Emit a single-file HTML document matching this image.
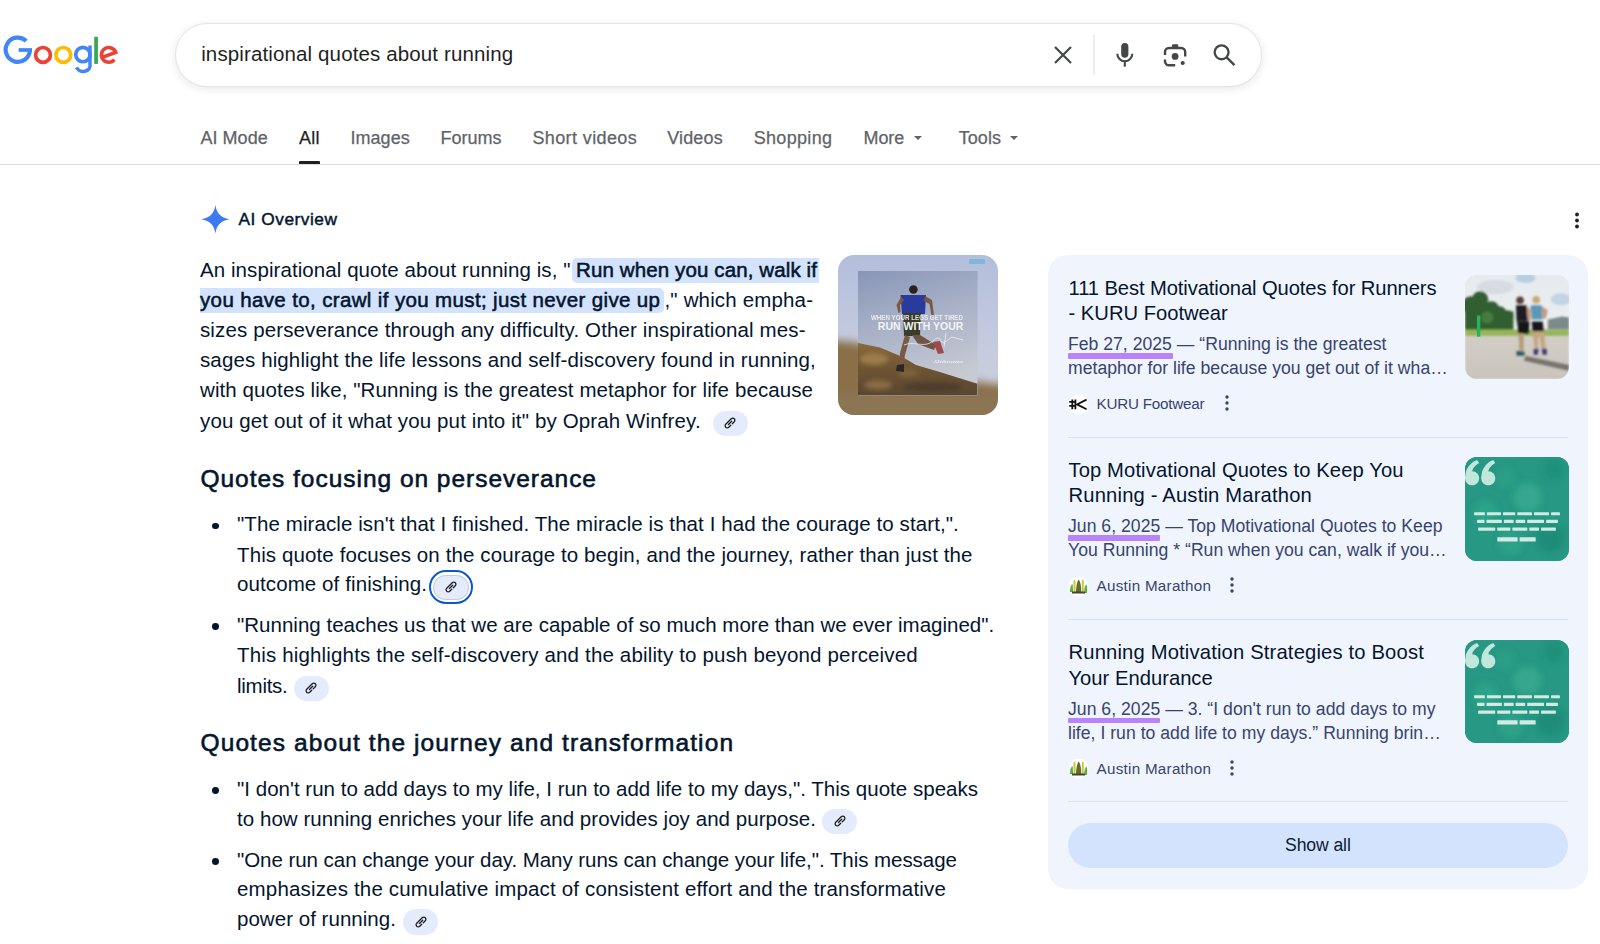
<!DOCTYPE html>
<html><head><meta charset="utf-8"><style>
html,body{margin:0;padding:0;background:#fff;width:1600px;height:944px;overflow:hidden;position:relative}
body{font-family:"Liberation Sans",sans-serif}
.abs{position:absolute}
.t{position:absolute;white-space:nowrap}
.t b{font-weight:700}
.sbox{left:174.8px;top:22.9px;width:1087px;height:64.4px;border-radius:32px;background:#fff;border:1px solid #e2e4e8;box-sizing:border-box;box-shadow:0 2px 8px rgba(32,33,36,.10)}
.chip{background:#e3ebfd;border-radius:13px}
.img1{left:838px;top:255px;width:159.5px;height:159.5px;border-radius:16px;overflow:hidden}
.i1bg{position:absolute;inset:0;background:linear-gradient(180deg,#b4bfd8 0%,#c5cde0 35%,#b9b8b4 52%,#8f7451 62%,#7a5e3a 80%,#9a8462 100%)}
.i1in{position:absolute;left:20px;top:16px;width:120px;height:124px;background:linear-gradient(180deg,#8f9dbb 0%,#aab4cb 40%,#c4c8d2 70%,#cfd0d3 100%)}
.panel{left:1048px;top:255px;width:540px;height:633.5px;border-radius:20px;background:#f0f4fd}
.img2{width:103.5px;height:103.5px;border-radius:12px;overflow:hidden;background:#e8ecef}
.img3{width:103.5px;height:103.5px;border-radius:12px;overflow:hidden;background:#279a83}
.showall{left:1068px;top:823px;width:500px;height:45px;border-radius:23px;background:#d3e3fd}
</style></head><body>
<svg class="abs" style="left:0;top:28px" width="125" height="50" viewBox="0 28 125 50">
<g fill="none" stroke-linecap="butt">
<path d="M26.24 40.96 A12.15 12.15 0 1 0 29.95 50.0" stroke="#4285f4" stroke-width="4.2"/>
<path d="M18.6 50.0 H32.0" stroke="#4285f4" stroke-width="3.7"/>
<circle cx="43" cy="54.9" r="7.4" stroke="#ea4335" stroke-width="3.7"/>
<circle cx="63.3" cy="54.9" r="7.4" stroke="#fbbc05" stroke-width="3.7"/>
<circle cx="82.9" cy="54.6" r="7.15" stroke="#4285f4" stroke-width="3.7"/>
<path d="M90.0 45.6 V64.8 A6.9 5.6 0 0 1 76.6 67.4" stroke="#4285f4" stroke-width="3.5"/>
<path d="M96.05 36.8 V63.9" stroke="#34a853" stroke-width="3.7"/>
<path d="M102.0 57.4 L115.66 52.34 A7.35 7.35 0 1 0 114.4 59.6" stroke="#ea4335" stroke-width="3.6"/>
</g></svg>
<div class="abs sbox"></div>
<div id="q" class="t" style="left:201.2px;top:43.65px;font-size:20.5px;line-height:20.5px;color:#1f1f1f;font-weight:400;letter-spacing:0.129px;">inspirational quotes about running</div>
<svg class="abs" style="left:1050px;top:30px" width="200" height="50" viewBox="1050 30 200 50">
<path d="M1055 47 L1071 63 M1071 47 L1055 63" stroke="#444746" stroke-width="2.2"/>
<rect x="1093.5" y="34.7" width="1" height="40.3" fill="#dadce0"/>
<rect x="1121.2" y="42.9" width="7.2" height="14.8" rx="3.6" fill="#444746"/>
<path d="M1117.3 53.8 A7.5 7.5 0 0 0 1132.3 53.8" fill="none" stroke="#444746" stroke-width="2.1"/>
<path d="M1124.8 61.5 V66.7" stroke="#444746" stroke-width="2.1"/>
<g fill="none" stroke="#444746" stroke-width="2.4">
<path d="M1165 55 V52 A4 4 0 0 1 1169 48 H1181.2 A4 4 0 0 1 1185.2 52 V56.5"/>
<path d="M1165 59.5 V61.3 A4 4 0 0 0 1169 65.3 H1175.2"/>
</g>
<rect x="1172" y="44.2" width="6.2" height="3.2" rx="1" fill="#444746"/>
<circle cx="1175.1" cy="56.4" r="3.4" fill="#444746"/>
<circle cx="1182.7" cy="63" r="2.1" fill="#444746"/>
<circle cx="1221.6" cy="52.3" r="6.95" fill="none" stroke="#444746" stroke-width="2.3"/>
<path d="M1226.6 57.3 L1234.5 65.2" stroke="#444746" stroke-width="2.4"/>
</svg>
<div id="t1" class="t" style="left:200.5px;top:128.56px;font-size:18px;line-height:18px;color:#5f6368;font-weight:400;letter-spacing:0.026px;-webkit-text-stroke:0.25px #5f6368;">AI Mode</div>
<div id="t2" class="t" style="left:299px;top:128.56px;font-size:18px;line-height:18px;color:#1f1f1f;font-weight:400;letter-spacing:0.242px;-webkit-text-stroke:0.25px #1f1f1f;">All</div>
<div id="t3" class="t" style="left:350.5px;top:128.56px;font-size:18px;line-height:18px;color:#5f6368;font-weight:400;letter-spacing:0.034px;-webkit-text-stroke:0.25px #5f6368;">Images</div>
<div id="t4" class="t" style="left:440.5px;top:128.56px;font-size:18px;line-height:18px;color:#5f6368;font-weight:400;letter-spacing:-0.023px;-webkit-text-stroke:0.25px #5f6368;">Forums</div>
<div id="t5" class="t" style="left:532.4px;top:128.56px;font-size:18px;line-height:18px;color:#5f6368;font-weight:400;letter-spacing:0.394px;-webkit-text-stroke:0.25px #5f6368;">Short videos</div>
<div id="t6" class="t" style="left:667.2px;top:128.56px;font-size:18px;line-height:18px;color:#5f6368;font-weight:400;letter-spacing:0.156px;-webkit-text-stroke:0.25px #5f6368;">Videos</div>
<div id="t7" class="t" style="left:753.7px;top:128.56px;font-size:18px;line-height:18px;color:#5f6368;font-weight:400;letter-spacing:0.317px;-webkit-text-stroke:0.25px #5f6368;">Shopping</div>
<div id="t8" class="t" style="left:863.5px;top:128.56px;font-size:18px;line-height:18px;color:#5f6368;font-weight:400;letter-spacing:-0.072px;-webkit-text-stroke:0.25px #5f6368;">More</div>
<div id="t9" class="t" style="left:958.7px;top:128.56px;font-size:18px;line-height:18px;color:#5f6368;font-weight:400;letter-spacing:0.067px;-webkit-text-stroke:0.25px #5f6368;">Tools</div>
<svg class="abs" style="left:900px;top:130px" width="130" height="20"><path d="M14 6 L22 6 L18 10 Z" fill="#5e6166"/><path d="M110 6 L118 6 L114 10 Z" fill="#5e6166"/></svg>
<div class="abs" style="left:299px;top:161px;width:21px;height:3px;background:#1f1f1f;border-radius:1px 1px 0 0"></div>
<div class="abs" style="left:0;top:164px;width:1600px;height:1px;background:#dadce0"></div>
<svg class="abs" style="left:200px;top:204px" width="32" height="32" viewBox="0 0 32 32">
<path d="M15.4 1 C16.6 9.2 20.5 13.6 29.5 15.3 C20.5 17.0 16.6 21.4 15.4 29.6 C14.2 21.4 10.3 17.0 1.2 15.3 C10.3 13.6 14.2 9.2 15.4 1 Z" fill="#3b7af0"/>
</svg>
<div id="aio" class="t" style="left:238.5px;top:211.16px;font-size:17.3px;line-height:17.3px;color:#04152e;font-weight:400;letter-spacing:0.534px;-webkit-text-stroke:0.45px #04152e;">AI Overview</div>
<svg class="abs" style="left:1570px;top:210px" width="14" height="22"><circle cx="7" cy="4.5" r="1.9" fill="#1f1f1f"/><circle cx="7" cy="10.5" r="1.9" fill="#1f1f1f"/><circle cx="7" cy="16.5" r="1.9" fill="#1f1f1f"/></svg>
<div class="abs" style="left:572px;top:257.5px;width:247px;height:25px;background:#d3e3fd;border-radius:5px 0 0 5px"></div>
<div class="abs" style="left:200px;top:288px;width:463.5px;height:25px;background:#d3e3fd;border-radius:0 5px 5px 0"></div>
<div id="p1a" class="t" style="left:200px;top:259.55px;font-size:20.5px;line-height:20.5px;color:#04152e;font-weight:400;letter-spacing:0.075px;">An inspirational quote about running is, "</div>
<div id="p1b" class="t" style="left:576px;top:259.55px;font-size:20.5px;line-height:20.5px;color:#04152e;font-weight:400;letter-spacing:0.118px;-webkit-text-stroke:0.55px #04152e;">Run when you can, walk if</div>
<div id="p2a" class="t" style="left:200px;top:289.75px;font-size:20.5px;line-height:20.5px;color:#04152e;font-weight:400;letter-spacing:0.365px;-webkit-text-stroke:0.55px #04152e;">you have to, crawl if you must; just never give up</div>
<div id="p2b" class="t" style="left:664.5px;top:289.75px;font-size:20.5px;line-height:20.5px;color:#04152e;font-weight:400;letter-spacing:0.157px;">," which empha-</div>
<div id="p3" class="t" style="left:200px;top:319.95px;font-size:20.5px;line-height:20.5px;color:#04152e;font-weight:400;letter-spacing:0.122px;">sizes perseverance through any difficulty. Other inspirational mes-</div>
<div id="p4" class="t" style="left:200px;top:350.15px;font-size:20.5px;line-height:20.5px;color:#04152e;font-weight:400;letter-spacing:0.122px;">sages highlight the life lessons and self-discovery found in running,</div>
<div id="p5" class="t" style="left:200px;top:380.35px;font-size:20.5px;line-height:20.5px;color:#04152e;font-weight:400;letter-spacing:0.094px;">with quotes like, "Running is the greatest metaphor for life because</div>
<div id="p6" class="t" style="left:200px;top:410.55px;font-size:20.5px;line-height:20.5px;color:#04152e;font-weight:400;letter-spacing:0.128px;">you get out of it what you put into it" by Oprah Winfrey.</div>
<div class="abs chip" style="left:712.7px;top:410.6px;width:35.2px;height:25.5px"><svg width="20" height="20" viewBox="-10 -10 20 20" style="position:absolute;left:7.7px;top:2.6px"><g transform="rotate(-45)" fill="none" stroke="#1f1f1f" stroke-width="1.3" stroke-linecap="round"><path d="M-1.1 2.15 H-3.9 A2.15 2.15 0 0 1 -3.9 -2.15 H3.9 A2.15 2.15 0 0 1 3.9 2.15 H1.1 M-2.2 0 H2.4"/></g></svg></div>
<div class="abs img1"><svg width="160" height="160" viewBox="0 0 160 160">
<defs>
<filter id="bl" x="-20%" y="-20%" width="140%" height="140%"><feGaussianBlur stdDeviation="4"/></filter>
<filter id="bl1" x="-20%" y="-20%" width="140%" height="140%"><feGaussianBlur stdDeviation="0.7"/></filter><filter id="bl2" x="-20%" y="-20%" width="140%" height="140%"><feGaussianBlur stdDeviation="2.2"/></filter><clipPath id="inclip"><rect x="20" y="16" width="119.5" height="124.5"/></clipPath>
<linearGradient id="sky0" x1="0" y1="0" x2="0" y2="1"><stop offset="0" stop-color="#b3bedb"/><stop offset="0.5" stop-color="#c3cadf"/><stop offset="1" stop-color="#cfd2dc"/></linearGradient>
<linearGradient id="sky1" x1="0" y1="0" x2="0.3" y2="1"><stop offset="0" stop-color="#8896b6"/><stop offset="0.45" stop-color="#a6afc6"/><stop offset="1" stop-color="#c6cad3"/></linearGradient>
<linearGradient id="hill" x1="0" y1="0" x2="0" y2="1"><stop offset="0" stop-color="#8a6a3c"/><stop offset="0.5" stop-color="#6e5433"/><stop offset="1" stop-color="#5a4630"/></linearGradient>
</defs>
<rect width="160" height="160" fill="url(#sky0)"/>
<g filter="url(#bl)">
<path d="M-10 86 C20 84 45 95 80 112 C110 122 140 128 170 130 V170 H-10 Z" fill="#8a7048"/>
<rect x="-10" y="138" width="180" height="30" fill="#8c7452"/>
</g>
<rect x="20" y="16" width="119.5" height="124.5" fill="url(#sky1)"/>
<g clip-path="url(#inclip)">
<path d="M20 88 L42 92.4 L64 101.7 L78 110 L101.7 117 L139.5 128.8 V140.5 H20 Z" fill="url(#hill)" filter="url(#bl1)"/>
<g filter="url(#bl2)">
<ellipse cx="36" cy="104" rx="14" ry="6" fill="#a88650" opacity="0.75"/>
<ellipse cx="95" cy="132" rx="30" ry="5" fill="#46372a" opacity="0.7"/>
<ellipse cx="40" cy="130" rx="14" ry="5" fill="#a08050" opacity="0.6"/>
<ellipse cx="70" cy="118" rx="10" ry="4" fill="#8a6e44" opacity="0.6"/>
</g></g>
<g filter="url(#bl1)">
<circle cx="75.4" cy="34.5" r="4.3" fill="#2a2420"/>
<path d="M62.5 40 L88 40 L87 59 L64 59 Z" fill="#2b3a9e"/>
<path d="M63 42 L58.5 50 L60.5 58 L62.5 57 L62 50 L66 45 Z" fill="#7a5a45"/>
<path d="M87 41 L94 45 L96 60 L93.5 61 L91.5 49 L86 46 Z" fill="#7a5a45"/>
<path d="M65 58 L83 58 L82 81 L66 81 Z" fill="#3a3a2c"/>
<path d="M67 80 L72 82 L67 100 L65 112 L61 112 L62 98 Z" fill="#7a5a45"/>
<path d="M59 110 L66 109 L66 117 L58 116 Z" fill="#2a2624"/>
<path d="M74 80 L82 80 L98 90 L96 95 L80 89 Z" fill="#6f5444"/>
<path d="M95 87 L102 86 L106 98 L100 99 Z" fill="#a04848"/>
</g>
<g fill="#f4f4f6" font-family="Liberation Sans" font-weight="700">
<text x="33" y="65.3" font-size="6.6" textLength="92" lengthAdjust="spacingAndGlyphs" opacity="0.9">WHEN YOUR LEGS GET TIRED</text>
<text x="39.8" y="75.4" font-size="10.8" textLength="85.6" lengthAdjust="spacingAndGlyphs">RUN WITH YOUR</text>
<text x="95" y="108" font-size="3.8" textLength="30" lengthAdjust="spacingAndGlyphs" opacity="0.85">-Unknown</text>
</g>
<path d="M66 90 C75 86 84 92 92 88 C98 84 100 80 103 86 C106 90 110 84 114 82 L125 85 M108 78 L106 92" fill="none" stroke="#eef0f4" stroke-width="0.9" opacity="0.85"/>
<rect x="131" y="4" width="16" height="5" rx="1" fill="#5fb0d8" opacity="0.6"/>
</svg></div>
<div id="h1" class="t" style="left:200.5px;top:467.36px;font-size:24.5px;line-height:24.5px;color:#04152e;font-weight:400;letter-spacing:0.971px;-webkit-text-stroke:0.6px #04152e;">Quotes focusing on perseverance</div>
<div class="abs" style="left:211.9px;top:522.5px;width:6.8px;height:6.8px;border-radius:50%;background:#04152e"></div>
<div id="l1a" class="t" style="left:237px;top:514.45px;font-size:20.5px;line-height:20.5px;color:#04152e;font-weight:400;letter-spacing:0.089px;">"The miracle isn't that I finished. The miracle is that I had the courage to start,".</div>
<div id="l1b" class="t" style="left:237px;top:544.55px;font-size:20.5px;line-height:20.5px;color:#04152e;font-weight:400;letter-spacing:0.110px;">This quote focuses on the courage to begin, and the journey, rather than just the</div>
<div id="l1c" class="t" style="left:237px;top:574.45px;font-size:20.5px;line-height:20.5px;color:#04152e;font-weight:400;letter-spacing:0.098px;">outcome of finishing.</div>
<div class="abs" style="left:428.5px;top:569.8px;width:44.8px;height:34px;border-radius:17px;border:2.6px solid #0b57d0;box-sizing:border-box"></div>
<div class="abs chip" style="left:433px;top:574.5px;width:35.5px;height:25.5px"><svg width="20" height="20" viewBox="-10 -10 20 20" style="position:absolute;left:7.8px;top:2.6px"><g transform="rotate(-45)" fill="none" stroke="#1f1f1f" stroke-width="1.3" stroke-linecap="round"><path d="M-1.1 2.15 H-3.9 A2.15 2.15 0 0 1 -3.9 -2.15 H3.9 A2.15 2.15 0 0 1 3.9 2.15 H1.1 M-2.2 0 H2.4"/></g></svg></div>
<div class="abs" style="left:433px;top:574.5px;width:35.5px;height:25.5px;border-radius:13px;border:1px solid #c8cacd;box-sizing:border-box"></div>
<div class="abs" style="left:211.9px;top:623.4px;width:6.8px;height:6.8px;border-radius:50%;background:#04152e"></div>
<div id="l2a" class="t" style="left:237px;top:615.15px;font-size:20.5px;line-height:20.5px;color:#04152e;font-weight:400;letter-spacing:0.011px;">"Running teaches us that we are capable of so much more than we ever imagined".</div>
<div id="l2b" class="t" style="left:237px;top:645.45px;font-size:20.5px;line-height:20.5px;color:#04152e;font-weight:400;letter-spacing:0.159px;">This highlights the self-discovery and the ability to push beyond perceived</div>
<div id="l2c" class="t" style="left:237px;top:675.55px;font-size:20.5px;line-height:20.5px;color:#04152e;font-weight:400;letter-spacing:-0.265px;">limits.</div>
<div class="abs chip" style="left:293.8px;top:675.6px;width:34.9px;height:25.5px"><svg width="20" height="20" viewBox="-10 -10 20 20" style="position:absolute;left:7.5px;top:2.6px"><g transform="rotate(-45)" fill="none" stroke="#1f1f1f" stroke-width="1.3" stroke-linecap="round"><path d="M-1.1 2.15 H-3.9 A2.15 2.15 0 0 1 -3.9 -2.15 H3.9 A2.15 2.15 0 0 1 3.9 2.15 H1.1 M-2.2 0 H2.4"/></g></svg></div>
<div id="h2" class="t" style="left:200.5px;top:731.26px;font-size:24.5px;line-height:24.5px;color:#04152e;font-weight:400;letter-spacing:1.102px;-webkit-text-stroke:0.6px #04152e;">Quotes about the journey and transformation</div>
<div class="abs" style="left:211.9px;top:787.3px;width:6.8px;height:6.8px;border-radius:50%;background:#04152e"></div>
<div id="l3a" class="t" style="left:237px;top:779.05px;font-size:20.5px;line-height:20.5px;color:#04152e;font-weight:400;letter-spacing:0.019px;">"I don't run to add days to my life, I run to add life to my days,". This quote speaks</div>
<div id="l3b" class="t" style="left:237px;top:808.85px;font-size:20.5px;line-height:20.5px;color:#04152e;font-weight:400;letter-spacing:0.056px;">to how running enriches your life and provides joy and purpose.</div>
<div class="abs chip" style="left:822px;top:808.9px;width:35.0px;height:25.5px"><svg width="20" height="20" viewBox="-10 -10 20 20" style="position:absolute;left:7.6px;top:2.6px"><g transform="rotate(-45)" fill="none" stroke="#1f1f1f" stroke-width="1.3" stroke-linecap="round"><path d="M-1.1 2.15 H-3.9 A2.15 2.15 0 0 1 -3.9 -2.15 H3.9 A2.15 2.15 0 0 1 3.9 2.15 H1.1 M-2.2 0 H2.4"/></g></svg></div>
<div class="abs" style="left:211.9px;top:858.2px;width:6.8px;height:6.8px;border-radius:50%;background:#04152e"></div>
<div id="l4a" class="t" style="left:237px;top:849.65px;font-size:20.5px;line-height:20.5px;color:#04152e;font-weight:400;letter-spacing:-0.051px;">"One run can change your day. Many runs can change your life,". This message</div>
<div id="l4b" class="t" style="left:237px;top:879.35px;font-size:20.5px;line-height:20.5px;color:#04152e;font-weight:400;letter-spacing:0.173px;">emphasizes the cumulative impact of consistent effort and the transformative</div>
<div id="l4c" class="t" style="left:237px;top:908.95px;font-size:20.5px;line-height:20.5px;color:#04152e;font-weight:400;letter-spacing:0.031px;">power of running.</div>
<div class="abs chip" style="left:403px;top:909.0px;width:35.0px;height:25.5px"><svg width="20" height="20" viewBox="-10 -10 20 20" style="position:absolute;left:7.6px;top:2.6px"><g transform="rotate(-45)" fill="none" stroke="#1f1f1f" stroke-width="1.3" stroke-linecap="round"><path d="M-1.1 2.15 H-3.9 A2.15 2.15 0 0 1 -3.9 -2.15 H3.9 A2.15 2.15 0 0 1 3.9 2.15 H1.1 M-2.2 0 H2.4"/></g></svg></div>
<div class="abs panel"></div>
<div id="c0t1" class="t" style="left:1068.5px;top:277.90px;font-size:20.2px;line-height:20.2px;color:#04152e;font-weight:400;letter-spacing:-0.097px;">111 Best Motivational Quotes for Runners</div>
<div id="c0t2" class="t" style="left:1068.5px;top:303.10px;font-size:20.2px;line-height:20.2px;color:#04152e;font-weight:400;letter-spacing:0.000px;">- KURU Footwear</div>
<div id="c0s1" class="t" style="left:1068px;top:336.20px;font-size:17.6px;line-height:17.6px;color:#37446d;font-weight:400;letter-spacing:0.016px;"><span class="dt">Feb 27, 2025</span> — “Running is the greatest</div>
<div id="c0s2" class="t" style="left:1068px;top:360.40px;font-size:17.6px;line-height:17.6px;color:#37446d;font-weight:400;letter-spacing:0.028px;">metaphor for life because you get out of it wha…</div>
<div class="abs" style="left:1068px;top:353.4px;width:105px;height:5.2px;background:#b984fb;border-radius:1px"></div>
<div id="c0src" class="t" style="left:1096.5px;top:396.13px;font-size:15.2px;line-height:15.2px;color:#37446d;font-weight:400;letter-spacing:-0.214px;">KURU Footwear</div>
<svg class="abs" style="left:1222px;top:393px" width="10" height="20"><circle cx="5" cy="4" r="1.7" fill="#37446d"/><circle cx="5" cy="10" r="1.7" fill="#37446d"/><circle cx="5" cy="16" r="1.7" fill="#37446d"/></svg>
<svg class="abs" style="left:1068px;top:393.5px" width="21" height="21"><circle cx="10.5" cy="10.5" r="10" fill="#fff"/>
<g stroke="#111" stroke-width="1.8" fill="none"><path d="M1.2 7.8 H6.8 M1.2 11.8 H6.8 M4.3 5.6 V15.2 M7.4 5.6 V15.2"/><path d="M18.6 5.6 L9 10.4 L18.6 15.2"/></g></svg>
<div class="abs img2" style="left:1465px;top:275.3px"><svg width="104" height="104" viewBox="0 0 103 103">
<defs><filter id="b2" x="-10%" y="-10%" width="120%" height="120%"><feGaussianBlur stdDeviation="1.2"/></filter>
<linearGradient id="sk2" x1="0" y1="0" x2="0" y2="1"><stop offset="0" stop-color="#e6eaee"/><stop offset="1" stop-color="#f0f2f2"/></linearGradient>
<linearGradient id="rd2" x1="0" y1="0" x2="0" y2="1"><stop offset="0" stop-color="#d2cec6"/><stop offset="1" stop-color="#c9c4bb"/></linearGradient></defs>
<rect width="103" height="103" fill="url(#sk2)"/>
<g filter="url(#b2)">
<ellipse cx="60" cy="3" rx="10" ry="5" fill="#b9cde4"/>
<ellipse cx="95" cy="24" rx="10" ry="6" fill="#c3d3e6"/>
<ellipse cx="30" cy="12" rx="18" ry="7" fill="#d6dce2"/>
<g fill="#335f30"><circle cx="6" cy="30" r="9"/><circle cx="15" cy="24" r="8"/><circle cx="13" cy="36" r="10"/><circle cx="26" cy="34" r="8"/><circle cx="34" cy="38" r="7"/><circle cx="42" cy="41" r="6"/><rect x="0" y="36" width="48" height="19"/></g>
<circle cx="22" cy="42" r="6" fill="#467a3e"/>
<path d="M82 44 L96 41 L103 42 V54 H82 Z" fill="#7d8a8a"/>
<rect x="0" y="54" width="103" height="7" fill="#98b55a"/>
<rect x="0" y="60.5" width="103" height="43" fill="url(#rd2)"/>
<path d="M60 80 L103 89 V95 L58 85 Z" fill="#6a655e" opacity="0.85"/>
</g>
<rect x="11.8" y="40" width="3.4" height="21" fill="#25b35e"/>
<g filter="url(#b2)" >
<circle cx="54.5" cy="25" r="3.8" fill="#5a4038"/>
<path d="M50.5 30 L61 30 L63 46 L51 46 Z" fill="#1e1e22"/>
<path d="M61 31 L65 34 L65 45 L62 45 Z" fill="#c59a80"/>
<path d="M51.5 46 L64 46 L63 58 L53 58 Z" fill="#141418"/>
<path d="M53 58 L58 58 L58 76 L54 76 Z" fill="#b79a7a"/>
<path d="M51 75 L59 76 L59 80 L51 80 Z" fill="#2e5a6a"/>
<circle cx="70.5" cy="24.5" r="3.8" fill="#c8a878"/>
<path d="M65 30 L76 30 L77 44 L66 44 Z" fill="#5d98b5"/>
<path d="M76 31 L82 35 L80 43 L77 43 Z" fill="#c49a80"/>
<path d="M66 46 L77 46 L78 56 L67 56 Z" fill="#161618"/>
<path d="M67 56 L73 56 L72 74 L69 74 Z M73 56 L78 56 L80 74 L76 74 Z" fill="#c5a582"/>
<path d="M68 73 L73 73 L72 79 L68 79 Z M76 73 L81 73 L81 79 L77 79 Z" fill="#3d3a7a"/>
</g>
</svg></div>
<div class="abs" style="left:1068px;top:436.5px;width:500px;height:1px;background:#d3e3fd"></div>
<div id="c1t1" class="t" style="left:1068.5px;top:459.90px;font-size:20.2px;line-height:20.2px;color:#04152e;font-weight:400;letter-spacing:0.115px;">Top Motivational Quotes to Keep You</div>
<div id="c1t2" class="t" style="left:1068.5px;top:485.10px;font-size:20.2px;line-height:20.2px;color:#04152e;font-weight:400;letter-spacing:0.178px;">Running - Austin Marathon</div>
<div id="c1s1" class="t" style="left:1068px;top:518.20px;font-size:17.6px;line-height:17.6px;color:#37446d;font-weight:400;letter-spacing:0.027px;"><span class="dt">Jun 6, 2025</span> — Top Motivational Quotes to Keep</div>
<div id="c1s2" class="t" style="left:1068px;top:542.40px;font-size:17.6px;line-height:17.6px;color:#37446d;font-weight:400;letter-spacing:0.019px;">You Running * “Run when you can, walk if you…</div>
<div class="abs" style="left:1068px;top:535.4px;width:92px;height:5.2px;background:#b984fb;border-radius:1px"></div>
<div id="c1src" class="t" style="left:1096.5px;top:578.13px;font-size:15.2px;line-height:15.2px;color:#37446d;font-weight:400;letter-spacing:0.279px;">Austin Marathon</div>
<svg class="abs" style="left:1226.8px;top:575px" width="10" height="20"><circle cx="5" cy="4" r="1.7" fill="#37446d"/><circle cx="5" cy="10" r="1.7" fill="#37446d"/><circle cx="5" cy="16" r="1.7" fill="#37446d"/></svg>
<svg class="abs" style="left:1068px;top:575.5px" width="21" height="21"><circle cx="10.5" cy="10.5" r="10" fill="#fff"/>
<path d="M2 16 C2 11 3 9 4.5 8 C5 11 5 14 5 16 Z" fill="#5fae3e"/><path d="M5.5 17 V5 C6 3 7 3 7.5 5 V17 Z" fill="#c8c83a"/><path d="M8 17 C8 9 9.5 5 10.7 3.5 C12 5 13.3 9 13.3 17 Z" fill="#5d6f2a"/><path d="M13.8 17 V5 C14.3 3 15.3 3 15.8 5 V17 Z" fill="#c8c83a"/><path d="M16.2 17 C16.2 12 17 9.5 18.5 8.5 C19.5 11 19.2 14 19 17 Z" fill="#5fae3e"/><rect x="4" y="15.5" width="13" height="2" fill="#444"/></svg>
<div class="abs img3" style="left:1465px;top:457.3px"><svg width="104" height="104" viewBox="0 0 103 103">
<defs><filter id="b31" x="-10%" y="-10%" width="120%" height="120%"><feGaussianBlur stdDeviation="3"/></filter>
<filter id="c31" x="-10%" y="-10%" width="120%" height="120%"><feGaussianBlur stdDeviation="0.5"/></filter></defs>
<rect width="103" height="103" fill="#269883"/>
<g filter="url(#b31)" opacity="0.8">
<circle cx="62" cy="40" r="14" fill="#3aab92"/>
<circle cx="20" cy="55" r="12" fill="#2ea68c"/>
<circle cx="85" cy="80" r="14" fill="#1c8a76"/>
<circle cx="45" cy="85" r="12" fill="#33a48b"/>
<circle cx="88" cy="12" r="10" fill="#1f8e78"/>
<circle cx="40" cy="20" r="10" fill="#2fa088"/>
</g>
<g filter="url(#c31)" fill="#cfeee4" opacity="0.92">
<path d="M1 14 C4 7 9 4 12 3 L14 6 C10 8 8 11 7 14 C11 14 14 17 14 21 C14 25 11 28 7 28 C3 28 0 25 0 20 Z"/>
<path d="M17 14 C20 7 25 4 28 3 L30 6 C26 8 24 11 23 14 C27 14 30 17 30 21 C30 25 27 28 23 28 C19 28 16 25 16 20 Z"/>
</g>
<g fill="#e4f4ee" filter="url(#c31)" opacity="0.9"><rect x="9.0" y="54.6" width="10.7" height="3.2" rx="0.6"/><rect x="21.7" y="54.6" width="14.0" height="3.2" rx="0.6"/><rect x="37.6" y="54.6" width="12.1" height="3.2" rx="0.6"/><rect x="51.7" y="54.6" width="14.6" height="3.2" rx="0.6"/><rect x="68.3" y="54.6" width="14.9" height="3.2" rx="0.6"/><rect x="85.2" y="54.6" width="8.8" height="3.2" rx="0.6"/><rect x="12.0" y="62.2" width="7.3" height="3.2" rx="0.6"/><rect x="21.3" y="62.2" width="15.2" height="3.2" rx="0.6"/><rect x="38.5" y="62.2" width="9.7" height="3.2" rx="0.6"/><rect x="50.2" y="62.2" width="9.4" height="3.2" rx="0.6"/><rect x="61.6" y="62.2" width="16.7" height="3.2" rx="0.6"/><rect x="80.3" y="62.2" width="11.7" height="3.2" rx="0.6"/><rect x="13.0" y="69.9" width="16.9" height="3.2" rx="0.6"/><rect x="31.9" y="69.9" width="13.0" height="3.2" rx="0.6"/><rect x="46.9" y="69.9" width="14.8" height="3.2" rx="0.6"/><rect x="63.7" y="69.9" width="9.6" height="3.2" rx="0.6"/><rect x="75.3" y="69.9" width="14.7" height="3.2" rx="0.6"/><rect x="32.0" y="79.4" width="20.1" height="4.4" rx="0.6"/><rect x="54.1" y="79.4" width="15.9" height="4.4" rx="0.6"/></g>
</svg></div>
<div class="abs" style="left:1068px;top:618.5px;width:500px;height:1px;background:#d3e3fd"></div>
<div id="c2t1" class="t" style="left:1068.5px;top:642.40px;font-size:20.2px;line-height:20.2px;color:#04152e;font-weight:400;letter-spacing:0.170px;">Running Motivation Strategies to Boost</div>
<div id="c2t2" class="t" style="left:1068.5px;top:667.60px;font-size:20.2px;line-height:20.2px;color:#04152e;font-weight:400;letter-spacing:0.012px;">Your Endurance</div>
<div id="c2s1" class="t" style="left:1068px;top:700.70px;font-size:17.6px;line-height:17.6px;color:#37446d;font-weight:400;letter-spacing:0.028px;"><span class="dt">Jun 6, 2025</span> — 3. “I don't run to add days to my</div>
<div id="c2s2" class="t" style="left:1068px;top:724.90px;font-size:17.6px;line-height:17.6px;color:#37446d;font-weight:400;letter-spacing:0.024px;">life, I run to add life to my days.” Running brin…</div>
<div class="abs" style="left:1068px;top:717.9px;width:92px;height:5.2px;background:#b984fb;border-radius:1px"></div>
<div id="c2src" class="t" style="left:1096.5px;top:760.63px;font-size:15.2px;line-height:15.2px;color:#37446d;font-weight:400;letter-spacing:0.279px;">Austin Marathon</div>
<svg class="abs" style="left:1226.8px;top:757.5px" width="10" height="20"><circle cx="5" cy="4" r="1.7" fill="#37446d"/><circle cx="5" cy="10" r="1.7" fill="#37446d"/><circle cx="5" cy="16" r="1.7" fill="#37446d"/></svg>
<svg class="abs" style="left:1068px;top:758.0px" width="21" height="21"><circle cx="10.5" cy="10.5" r="10" fill="#fff"/>
<path d="M2 16 C2 11 3 9 4.5 8 C5 11 5 14 5 16 Z" fill="#5fae3e"/><path d="M5.5 17 V5 C6 3 7 3 7.5 5 V17 Z" fill="#c8c83a"/><path d="M8 17 C8 9 9.5 5 10.7 3.5 C12 5 13.3 9 13.3 17 Z" fill="#5d6f2a"/><path d="M13.8 17 V5 C14.3 3 15.3 3 15.8 5 V17 Z" fill="#c8c83a"/><path d="M16.2 17 C16.2 12 17 9.5 18.5 8.5 C19.5 11 19.2 14 19 17 Z" fill="#5fae3e"/><rect x="4" y="15.5" width="13" height="2" fill="#444"/></svg>
<div class="abs img3" style="left:1465px;top:639.8px"><svg width="104" height="104" viewBox="0 0 103 103">
<defs><filter id="b32" x="-10%" y="-10%" width="120%" height="120%"><feGaussianBlur stdDeviation="3"/></filter>
<filter id="c32" x="-10%" y="-10%" width="120%" height="120%"><feGaussianBlur stdDeviation="0.5"/></filter></defs>
<rect width="103" height="103" fill="#269883"/>
<g filter="url(#b32)" opacity="0.8">
<circle cx="62" cy="40" r="14" fill="#3aab92"/>
<circle cx="20" cy="55" r="12" fill="#2ea68c"/>
<circle cx="85" cy="80" r="14" fill="#1c8a76"/>
<circle cx="45" cy="85" r="12" fill="#33a48b"/>
<circle cx="88" cy="12" r="10" fill="#1f8e78"/>
<circle cx="40" cy="20" r="10" fill="#2fa088"/>
</g>
<g filter="url(#c32)" fill="#cfeee4" opacity="0.92">
<path d="M1 14 C4 7 9 4 12 3 L14 6 C10 8 8 11 7 14 C11 14 14 17 14 21 C14 25 11 28 7 28 C3 28 0 25 0 20 Z"/>
<path d="M17 14 C20 7 25 4 28 3 L30 6 C26 8 24 11 23 14 C27 14 30 17 30 21 C30 25 27 28 23 28 C19 28 16 25 16 20 Z"/>
</g>
<g fill="#e4f4ee" filter="url(#c32)" opacity="0.9"><rect x="9.0" y="54.6" width="10.7" height="3.2" rx="0.6"/><rect x="21.7" y="54.6" width="14.0" height="3.2" rx="0.6"/><rect x="37.6" y="54.6" width="12.1" height="3.2" rx="0.6"/><rect x="51.7" y="54.6" width="14.6" height="3.2" rx="0.6"/><rect x="68.3" y="54.6" width="14.9" height="3.2" rx="0.6"/><rect x="85.2" y="54.6" width="8.8" height="3.2" rx="0.6"/><rect x="12.0" y="62.2" width="7.3" height="3.2" rx="0.6"/><rect x="21.3" y="62.2" width="15.2" height="3.2" rx="0.6"/><rect x="38.5" y="62.2" width="9.7" height="3.2" rx="0.6"/><rect x="50.2" y="62.2" width="9.4" height="3.2" rx="0.6"/><rect x="61.6" y="62.2" width="16.7" height="3.2" rx="0.6"/><rect x="80.3" y="62.2" width="11.7" height="3.2" rx="0.6"/><rect x="13.0" y="69.9" width="16.9" height="3.2" rx="0.6"/><rect x="31.9" y="69.9" width="13.0" height="3.2" rx="0.6"/><rect x="46.9" y="69.9" width="14.8" height="3.2" rx="0.6"/><rect x="63.7" y="69.9" width="9.6" height="3.2" rx="0.6"/><rect x="75.3" y="69.9" width="14.7" height="3.2" rx="0.6"/><rect x="32.0" y="79.4" width="20.1" height="4.4" rx="0.6"/><rect x="54.1" y="79.4" width="15.9" height="4.4" rx="0.6"/></g>
</svg></div>
<div class="abs" style="left:1068px;top:801.0px;width:500px;height:1px;background:#d3e3fd"></div>
<div class="abs showall"></div>
<div id="show" class="t" style="left:1285px;top:836.80px;font-size:17.6px;line-height:17.6px;color:#0b1b30;font-weight:400;letter-spacing:-0.102px;">Show all</div>
</body></html>
